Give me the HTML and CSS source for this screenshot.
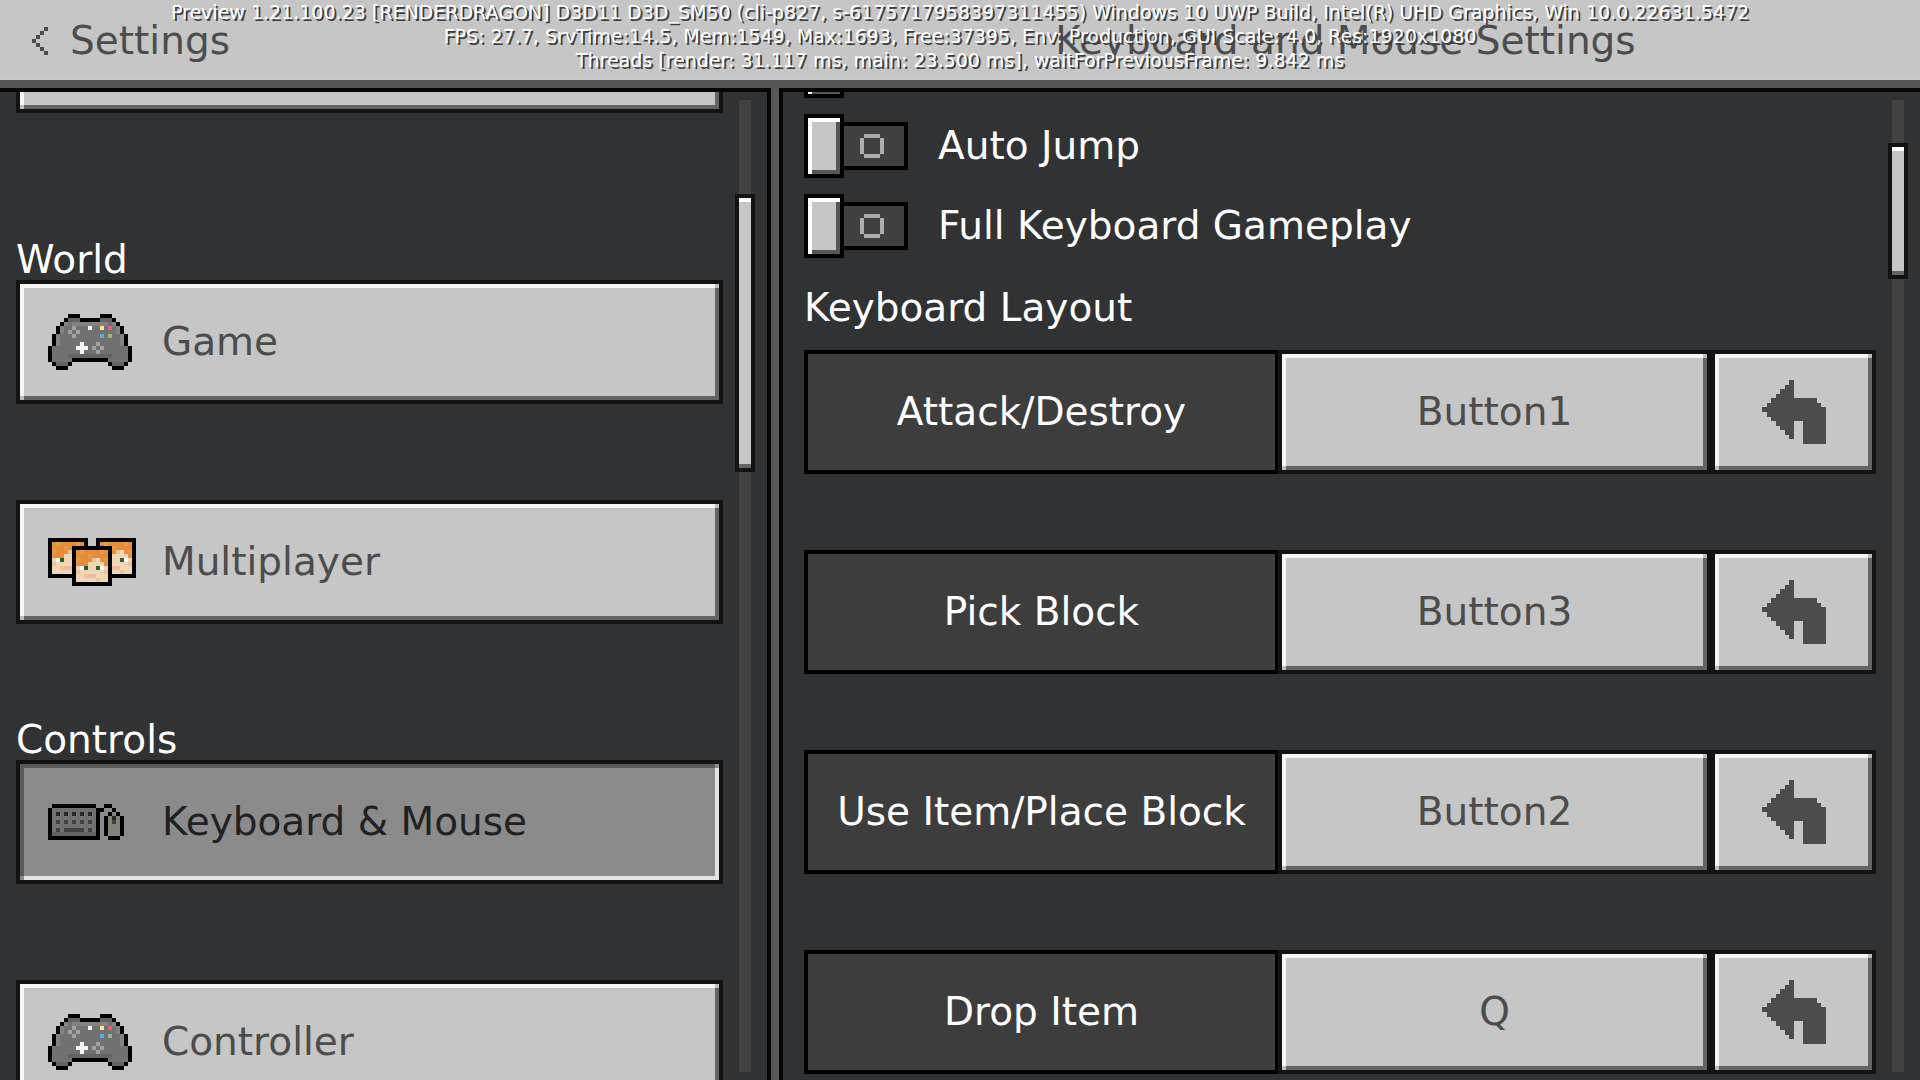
FILE: index.html
```html
<!DOCTYPE html>
<html lang="en">
<head>
<meta charset="utf-8">
<title>Keyboard and Mouse Settings</title>
<link rel="stylesheet" href="styles.css">
</head>
<body>
<svg class="defs" aria-hidden="true">
  <symbol id="gamepad" viewBox="0 0 21 14">
    <path fill="#727172" d="M5 1h3v1h5V1h3v1h1v1h1v2h1v3h1v4h-1v1h-4v-2H6v2H2v-1H1V8h1V5h1V3h1V2h1z"/>
    <path fill="#848284" d="M6 2h9v1H6zM3 3h1v2H3zM17 3h1v2h-1zM2 5h1v3H2zM18 5h1v3h-1zM4 2h1v1H4zM16 2h1v1h-1z"/>
    <path fill="#636363" d="M5 1h3v1H5zM13 1h3v1h-3zM5 10h11v1H5zM2 12h3v1H2zM16 12h3v1h-3z"/>
    <path d="M5 0h3v1H5zM13 0h3v1h-3zM4 1h1v1H4zM8 1h5v1H8zM16 1h1v1h-1zM3 2h1v1H3zM17 2h1v1h-1zM2 3h1v2H2zM18 3h1v2h-1zM1 5h1v3H1zM19 5h1v3h-1zM0 8h1v4H0zM20 8h1v4h-1zM6 11h9v1H6zM1 12h1v1H1zM5 12h1v1H5zM15 12h1v1h-1zM19 12h1v1h-1zM2 13h3v1H2zM16 13h3v1h-3z"/>
    <path fill="#a2a1a3" d="M6 3h1v1H6zM5 4h1v1H5zM7 4h1v1H7zM6 5h1v1H6zM12 7h1v1h-1zM11 8h1v1h-1zM13 8h1v1h-1zM12 9h1v1h-1z"/>
    <path fill="#f5f5f5" d="M10 3h1v1h-1zM8 7h1v1h1v1H9v1H8V9H7V8h1z"/>
    <path fill="#f5e98a" d="M13 3h1v1h-1z"/><path fill="#ec5f78" d="M15 3h1v1h-1z"/>
    <path fill="#5aaee3" d="M13 5h1v1h-1z"/><path fill="#93b77f" d="M15 5h1v1h-1z"/>
  </symbol>
  <symbol id="face" viewBox="0 0 10 10">
    <path d="M0 0h10v10H0z"/>
    <path fill="#f1d7b5" d="M1 1h8v8H1z"/>
    <path fill="#e48d3b" d="M1 1h8v4H8V4H7V3H5v1H4v1H1z"/>
    <path fill="#eb9846" d="M2 1h1v1H2zM4 2h1v1H4zM7 1h1v1H7zM1 3h1v1H1zM8 3h1v1H8z"/>
    <path fill="#ecc59e" d="M5 3h1v1H5zM1 6h1v1H1zM8 6h1v1H8zM3 7h1v1H3zM6 8h1v1H6z"/>
    <path fill="#fff" d="M2 5h1v1H2zM7 5h1v1H7z"/>
    <path fill="#236224" d="M3 5h1v1H3zM6 5h1v1H6z"/>
    <path fill="#eeb8a6" d="M4 7h2v1H4z"/>
  </symbol>
  <symbol id="undo" viewBox="0 0 64 64">
    <path fill="#4c4c4c" d="M27 0h5v18h23v5h4v4h5v37H41V41h-9v18h-5v-4h-4v-5h-5v-4h-4v-5H9v-4H5v-5H0v-5h5v-4h4v-5h5v-4h4V9h5V5h4z"/>
  </symbol>
</svg>

<header class="topbar">
  <button class="back" type="button">
    <svg class="chevron" viewBox="0 0 4 7" aria-hidden="true"><path d="M3 0h1v1H3zM2 1h1v1H2zM1 2h1v1H1zM0 3h1v1H0zM1 4h1v1H1zM2 5h1v1H2zM3 6h1v1H3z"/></svg>
    Settings
  </button>
  <h1 class="title">Keyboard and Mouse Settings</h1>
</header>

<main class="panels">
  <nav class="panel sidebar" aria-label="Settings">
    <div class="content">
      <section class="group group-first">
        <button class="nav-item bevel" type="button" aria-label="General"></button>
      </section>
      <section class="group">
        <h2 class="group-title">World</h2>
        <button class="nav-item bevel" type="button">
          <span class="nav-icon"><svg class="i-gamepad" aria-hidden="true"><use href="#gamepad"/></svg></span>Game
        </button>
        <button class="nav-item nav-next bevel" type="button">
          <span class="nav-icon"><svg class="i-faces" viewBox="0 0 22 12" aria-hidden="true">
            <use href="#face" x="0" y="0" width="10" height="10"/>
            <use href="#face" x="12" y="0" width="10" height="10"/>
            <use href="#face" x="6" y="2" width="10" height="10"/>
          </svg></span>Multiplayer
        </button>
      </section>
      <section class="group">
        <h2 class="group-title">Controls</h2>
        <button class="nav-item bevel selected" type="button" aria-current="page">
          <span class="nav-icon"><svg class="i-keyboard" viewBox="0 0 19 9" aria-hidden="true">
            <path fill="#717171" d="M1 1h11v7H1z"/><path fill="#636363" d="M1 7h11v1H1z"/>
            <path fill="#858279" d="M15 3h3v5h-3zM16 2h1v1h-1z"/>
            <path d="M1 0h11v1H1zM0 1h1v8H0zM1 8h12v1H1zM12 1h2v1h-1v6h-1zM14 0h2v1h-2zM16 1h1v1h-1zM15 2h1v1h-1zM17 2h1v1h-1zM14 3h1v5h-1zM18 3h1v5h-1zM15 8h3v1h-3z"/>
            <path fill="#272727" d="M2 2h1v1H2zM4 2h1v1H4zM6 2h1v1H6zM8 2h1v1H8zM10 2h1v1h-1zM16 3h1v1h-1z"/>
            <path fill="#424242" d="M2 4h1v1H2zM4 4h1v1H4zM6 4h1v1H6zM8 4h1v1H8zM10 4h1v1h-1zM2 6h1v1H2zM4 6h5v1H4zM10 6h1v1h-1zM16 4h1v1h-1z"/>
          </svg></span>Keyboard &amp; Mouse
        </button>
        <button class="nav-item nav-next bevel" type="button">
          <span class="nav-icon"><svg class="i-gamepad" aria-hidden="true"><use href="#gamepad"/></svg></span>Controller
        </button>
      </section>
    </div>
    <div class="track"><div class="thumb thumb-nav"></div></div>
  </nav>

  <section class="panel detail">
    <div class="content">
      <div class="toggles">
        <label class="toggle-row"><input class="toggle" type="checkbox" aria-label="Option"></label>
        <label class="toggle-row"><input class="toggle" type="checkbox">Auto Jump</label>
        <label class="toggle-row"><input class="toggle" type="checkbox">Full Keyboard Gameplay</label>
      </div>
      <h2 class="layout-title">Keyboard Layout</h2>
      <div class="bindings">
        <div class="binding">
          <div class="action">Attack/Destroy</div>
          <button class="key bevel" type="button">Button1</button>
          <button class="reset bevel" type="button" aria-label="Reset"><svg class="i-undo" aria-hidden="true"><use href="#undo"/></svg></button>
        </div>
        <div class="binding">
          <div class="action">Pick Block</div>
          <button class="key bevel" type="button">Button3</button>
          <button class="reset bevel" type="button" aria-label="Reset"><svg class="i-undo" aria-hidden="true"><use href="#undo"/></svg></button>
        </div>
        <div class="binding">
          <div class="action">Use Item/Place Block</div>
          <button class="key bevel" type="button">Button2</button>
          <button class="reset bevel" type="button" aria-label="Reset"><svg class="i-undo" aria-hidden="true"><use href="#undo"/></svg></button>
        </div>
        <div class="binding">
          <div class="action">Drop Item</div>
          <button class="key bevel" type="button">Q</button>
          <button class="reset bevel" type="button" aria-label="Reset"><svg class="i-undo" aria-hidden="true"><use href="#undo"/></svg></button>
        </div>
      </div>
    </div>
    <div class="track"><div class="thumb thumb-detail"></div></div>
  </section>
</main>

<div class="debug">
  <p>Preview 1.21.100.23 [RENDERDRAGON] D3D11 D3D_SM50 (cli-p827, s-6175717958397311455) Windows 10 UWP Build, Intel(R) UHD Graphics, Win 10.0.22631.5472</p>
  <p>FPS: 27.7, SrvTime:14.5, Mem:1549, Max:1693, Free:37395, Env: Production, GUI Scale: 4.0, Res:1920x1080</p>
  <p>Threads [render: 31.117 ms, main: 23.500 ms], waitForPreviousFrame: 9.842 ms</p>
</div>
</body>
</html>
```
FILE: styles.css
```css
*,
*::before,
*::after {
  box-sizing: border-box;
}

body {
  margin: 0;
  height: 100vh;
  display: flex;
  flex-direction: column;
  overflow: hidden;
  background: #575658;
  color: #fff;
  font: 39px/40px "DejaVu Sans", sans-serif;
}

button {
  margin: 0;
  padding: 0;
  border: 0;
  background: none;
  font: inherit;
  color: #4c4c4c;
}

h1,
h2,
p {
  margin: 0;
  font: inherit;
}

svg {
  display: block;
  shape-rendering: crispEdges;
}

.defs {
  position: absolute;
  width: 0;
  height: 0;
}

/* Top bar */
.topbar {
  flex: none;
  display: grid;
  grid-template-columns: 771fr 1149fr;
  align-items: center;
  height: 80px;
  padding-top: 6px;
  background: #c6c6c6;
  border-bottom: 4px solid #c8cacb;
  color: #4c4c4c;
}

.back {
  display: flex;
  align-items: center;
  gap: 22px;
  padding-left: 32px;
}

.chevron {
  width: 16px;
  height: 28px;
  fill: #4c4c4c;
}

.title {
  text-align: center;
}

/* Panels */
.panels {
  flex: 1;
  min-height: 0;
  display: grid;
  grid-template-columns: 771fr 1141fr;
  grid-template-rows: minmax(0, 1fr);
  gap: 8px;
  padding-top: 8px;
}

.panel {
  display: flex;
  gap: 16px;
  min-width: 0;
  padding-right: 16px;
  border: 0 solid #050505;
  border-top-width: 4px;
  background: #313233;
  overflow: hidden;
}

.sidebar {
  padding-left: 16px;
  border-right-width: 4px;
}

.detail {
  padding-left: 21px;
  border-left-width: 4px;
}

.content {
  flex: 1;
  min-width: 0;
}

.track {
  position: relative;
  flex: none;
  width: 12px;
  margin: 8px 0;
  background: #424242;
}

.thumb {
  position: absolute;
  left: -4px;
  width: 20px;
  border: 4px solid #131313;
  background: #c6c6c6;
  box-shadow: inset 0 4px 0 #fff, inset 0 -4px 0 #656465;
}

.thumb-nav {
  top: 9.7%;
  height: 28.6%;
}

.thumb-detail {
  top: 4.4%;
  height: 14%;
}

/* Raised pixel buttons */
.bevel {
  --face: #c6c6c6;
  --light: #f7f7f7;
  --dark: #656465;
  --corner: #bebebe;
  border: 4px solid #131313;
  background:
    linear-gradient(var(--corner), var(--corner)) 0 100% / 4px 4px no-repeat,
    linear-gradient(var(--corner), var(--corner)) 100% 0 / 4px 4px no-repeat,
    linear-gradient(var(--light), var(--light)) 0 0 / 100% 4px no-repeat,
    linear-gradient(var(--light), var(--light)) 0 0 / 4px 100% no-repeat,
    linear-gradient(var(--dark), var(--dark)) 0 100% / 100% 4px no-repeat,
    linear-gradient(var(--dark), var(--dark)) 100% 0 / 4px 100% no-repeat,
    var(--face);
  background-origin: padding-box;
}

.selected {
  --face: #8b8b8b;
  --light: #5a5a5a;
  --dark: #e2e2e2;
  --corner: #8b8b8b;
  color: #212121;
}

/* Sidebar */
.group {
  margin-bottom: 96px;
}

.group-first {
  margin-top: -103px;
  margin-bottom: 127px;
}

.nav-item {
  display: flex;
  align-items: center;
  gap: 26px;
  width: 100%;
  height: 124px;
  padding: 0 28px;
}

.nav-next {
  margin-top: 96px;
}

.nav-icon {
  flex: none;
  width: 88px;
}

.i-gamepad {
  width: 84px;
  height: 56px;
}

.i-faces {
  width: 88px;
  height: 48px;
}

.i-keyboard {
  width: 76px;
  height: 36px;
}

.i-undo {
  width: 64px;
  height: 64px;
}

/* Toggles */
.toggles {
  display: grid;
  gap: 16px;
  margin-top: -58px;
}

.toggle-row {
  display: flex;
  align-items: center;
  gap: 30px;
  height: 64px;
}

.toggle {
  appearance: none;
  display: flex;
  align-items: center;
  gap: 16px;
  width: 104px;
  height: 64px;
  margin: 0;
  background: linear-gradient(#404040, #404040) 0 50% / 100px 40px no-repeat, linear-gradient(#000, #000) 0 50% / 104px 48px no-repeat;
}

.toggle::before {
  content: "";
  width: 40px;
  height: 64px;
  border: 4px solid #000;
  background: #c6c6c6;
  box-shadow: inset 4px 4px 0 #fff, inset -4px -4px 0 #585758;
}

.toggle::after {
  content: "";
  width: 24px;
  height: 24px;
  background:
    linear-gradient(#adadad, #adadad) 50% 0 / 16px 4px no-repeat,
    linear-gradient(#adadad, #adadad) 50% 100% / 16px 4px no-repeat,
    linear-gradient(#adadad, #adadad) 0 50% / 4px 16px no-repeat,
    linear-gradient(#adadad, #adadad) 100% 50% / 4px 16px no-repeat;
}

/* Key bindings */
.layout-title {
  margin: 30px 0 22px;
}

.bindings {
  display: grid;
  gap: 76px;
}

.binding {
  display: grid;
  grid-template-columns: 474fr 433fr 165fr;
  height: 124px;
}

.action {
  display: grid;
  place-items: center;
  border: 4px solid #000;
  border-right-width: 3px;
  background: #3d3d3d;
}

.reset {
  display: grid;
  place-items: center;
}

/* Debug overlay */
.debug {
  position: absolute;
  top: 0;
  left: 0;
  right: 0;
  text-align: center;
  font-size: 19px;
  line-height: 24px;
  text-shadow: 2px 2px 0 #3e3e3e;
  white-space: nowrap;
  pointer-events: none;
}
```
